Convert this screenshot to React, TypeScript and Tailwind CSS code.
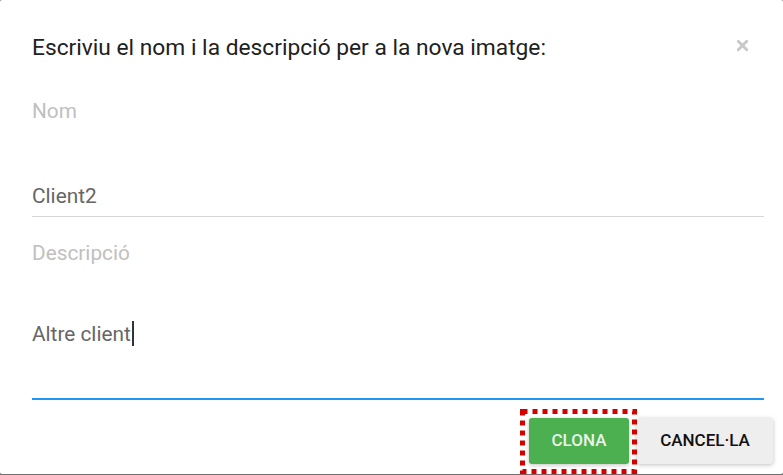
import { X } from "lucide-react";

const Field = ({
  label,
  value,
  focused,
  caret,
  gap,
}: {
  label: string;
  value: string;
  focused?: boolean;
  caret?: boolean;
  gap: string;
}) => (
  <div className="flex flex-col">
    <div className="text-[20.8px] leading-6 text-[#c0c0c0]">{label}</div>
    <div className={`flex items-center text-[20.8px] leading-6 text-[#666] ${gap}`}>
      <span>{value}</span>
      {caret && <span className="ml-[1px] h-[25px] w-[2px] bg-[#333]" />}
    </div>
    {focused ? (
      <div className="mt-[52px] h-[2px] bg-[#2196f3]" />
    ) : (
      <div className="mt-[8px] h-px bg-[#d6d6d6]" />
    )}
  </div>
);

const App = () => {
  return (
    <div className="h-[475px] w-[783px] overflow-hidden bg-[#8a8a8a] font-['Roboto',sans-serif]">
      <div className="relative flex h-[474px] flex-col rounded-[2px] bg-white shadow-[0_1px_3px_rgba(0,0,0,0.3)]">
        <div className="flex items-start justify-between pl-8 pr-[32px] pt-8">
          <h3 className="text-[22.75px] font-normal leading-8 text-[#212121]">
            Escriviu el nom i la descripció per a la nova imatge:
          </h3>
          <X size={17} strokeWidth={4} className="mt-[5px] text-[#c8c8c8]" />
        </div>

        <div className="flex flex-col gap-[24px] pl-8 pr-[19px] pt-[35px]">
          <Field label="Nom" value="Client2" gap="mt-[61px]" />
          <Field label="Descripció" value="Altre client" gap="mt-[56px]" caret focused />
        </div>

        <div className="mt-auto flex justify-end gap-2 pb-[10px] pr-[10px]">
          <div className="relative">
            <button className="h-[46px] w-[100px] rounded-[3px] bg-[#4caf50] text-[17px] font-medium uppercase text-[#e8f5e9] shadow-[0_1px_4px_rgba(0,0,0,0.25)]">
              Clona
            </button>
            <svg
              className="pointer-events-none absolute left-[-9px] top-[-9px]"
              width="117"
              height="65"
              viewBox="0 0 117 65"
            >
              <rect
                x="2.5"
                y="2.5"
                width="112"
                height="60"
                fill="none"
                stroke="#d40000"
                strokeWidth="5"
                strokeDasharray="5 5"
              />
            </svg>
          </div>
          <button className="h-[46px] w-[136px] rounded-[3px] bg-[#eeeeee] text-[17px] font-medium uppercase text-[#111] shadow-[0_1px_4px_rgba(0,0,0,0.25)]">
            Cancel·la
          </button>
        </div>
      </div>
    </div>
  );
};

export default App;
